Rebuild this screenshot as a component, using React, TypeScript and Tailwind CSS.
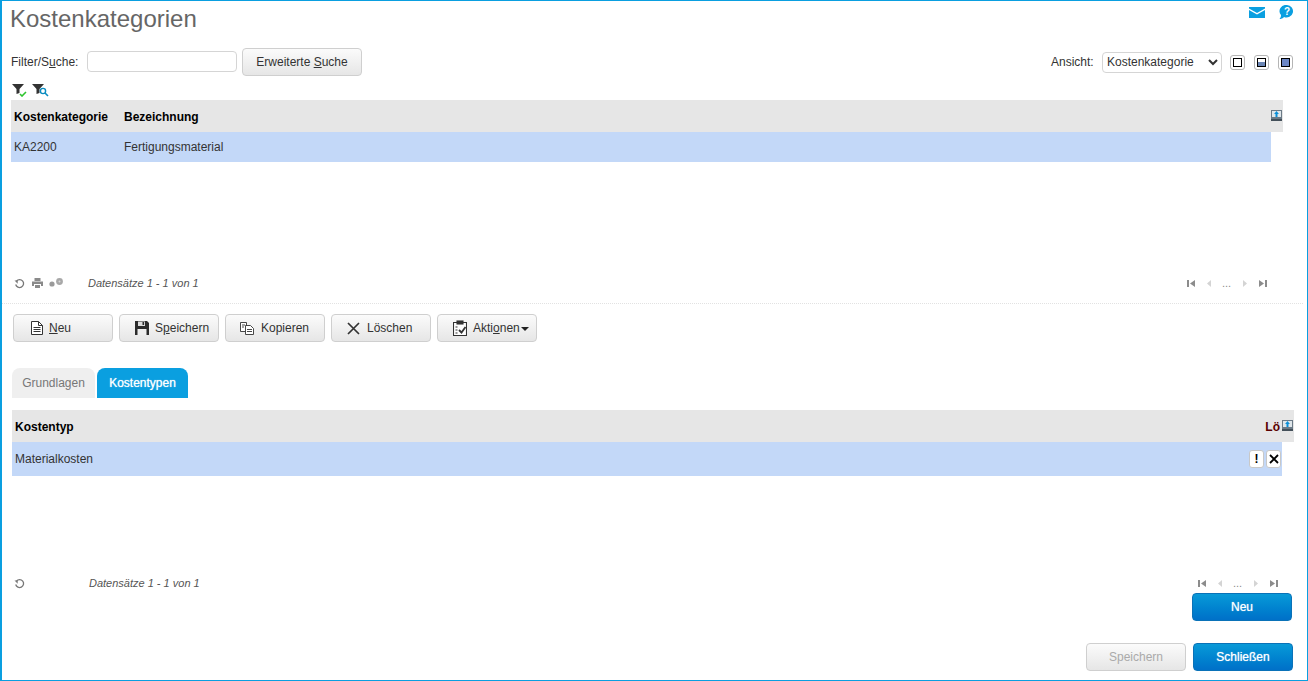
import type { ReactNode } from 'react';

const btn =
  'h-[28px] w-[100px] flex items-center rounded-[4px] border border-[#cfcfcf] bg-gradient-to-b from-[#fbfbfb] to-[#e6e6e6] text-[12px] text-[#333]';
const primary =
  'h-[28px] w-[100px] flex items-center justify-center rounded-[4px] border border-[#0a72b8] bg-gradient-to-b from-[#0a9ad8] to-[#0070c8] text-[12px] text-white [text-shadow:0_0_1px_rgba(255,255,255,0.8)]';

function Funnel() {
  return <path d="M0 0h12l-4.500 5v4l-3 1V5z" fill="#333" />;
}

function FilterIcons() {
  return (
    <div className="ml-[1px] h-[14px] flex items-center gap-[5px]">
      <svg width="15" height="13" viewBox="0 0 15 13">
        <Funnel />
        <path d="M8 10l2 2 4-4" stroke="#2fc42f" strokeWidth="1.6" fill="none" />
      </svg>
      <svg width="17" height="13" viewBox="0 0 17 13">
        <Funnel />
        <circle cx="11" cy="7" r="2.6" fill="#fff" stroke="#0a8cc0" strokeWidth="1.4" />
        <path d="M13 9l3 3" stroke="#0a8cc0" strokeWidth="1.6" />
      </svg>
    </div>
  );
}

function ColumnsIcon() {
  return (
    <svg width="11" height="11" viewBox="0 0 11 11">
      <rect x="0" y="0" width="11" height="9" fill="#6b7a86" />
      <rect x="1" y="1" width="9" height="6" fill="#dfe6ea" />
      <path d="M5.500 1l2.400 3H6.500v3h-2V4H3.100z" fill="#0a8fd8" />
      <rect x="0" y="9" width="11" height="2" fill="#44505a" />
    </svg>
  );
}

function Reload() {
  return (
    <svg width="11" height="11" viewBox="0 0 11 11" fill="none" stroke="#777" strokeWidth="1.3">
      <path d="M2.500 3a4 4 0 1 1-.8 3.500" />
      <path d="M0.500 2.500h3.200v3.200z" fill="#777" stroke="none" />
    </svg>
  );
}

function Printer() {
  return (
    <svg width="11" height="10" viewBox="0 0 11 10" fill="#8a8a8a">
      <path d="M2.500 0h6v3h-6zM0 3.500h11V8H9V6H2v2H0zM3 7h5v3H3z" />
    </svg>
  );
}

function Gears() {
  return (
    <svg width="15" height="10" viewBox="0 0 15 10" fill="#9a9a9a">
      <circle cx="3" cy="6" r="2.600" />
      <circle cx="10.500" cy="3.500" r="3.400" fill="#a8a8a8" />
      <circle cx="10.500" cy="3.500" r="1" fill="#d8d8d8" />
    </svg>
  );
}

function Pager() {
  return (
    <div className="flex items-center text-[#9a9a9a]">
      <svg width="9" height="9" viewBox="0 0 9 9" fill="#8c8c8c">
        <path d="M0 1h2v7H0zM8 1v7L3 4.500z" />
      </svg>
      <svg className="ml-[10px]" width="6" height="9" viewBox="0 0 6 9" fill="#d4d4d4">
        <path d="M5 1v7L1 4.500z" />
      </svg>
      <span className="ml-[10px] w-[9px] text-[11px] leading-[9px] text-[#8a8a8a]">...</span>
      <svg className="ml-[11px]" width="6" height="9" viewBox="0 0 6 9" fill="#d4d4d4">
        <path d="M1 1v7l4-3.500z" />
      </svg>
      <svg className="ml-[10px]" width="9" height="9" viewBox="0 0 9 9" fill="#8c8c8c">
        <path d="M1 1v7l5-3.500zM7 1h2v7H7z" />
      </svg>
    </div>
  );
}

function Records() {
  return <span className="text-[11px] italic text-[#555]">Datensätze 1 - 1 von 1</span>;
}

function DocIcon() {
  return (
    <svg width="12" height="14" viewBox="0 0 12 14" fill="none" stroke="#333">
      <path d="M.500.500h7l4 4v9h-11z" fill="#fff" />
      <path d="M7.500.500v4h4M2.500 6.500h7M2.500 8.500h7M2.500 10.500h7" />
    </svg>
  );
}

function SaveIcon() {
  return (
    <svg width="14" height="14" viewBox="0 0 14 14" fill="#2b2b2b">
      <path d="M0 0h12l2 2v12H0z" />
      <rect x="3" y="0.500" width="7" height="4.500" fill="#ddd" />
      <rect x="7.500" y="1" width="1.600" height="3" fill="#2b2b2b" />
      <rect x="2.500" y="8" width="9" height="6" fill="#eee" />
    </svg>
  );
}

function CopyIcon() {
  return (
    <svg width="14" height="13" viewBox="0 0 14 13" fill="#fff" stroke="#333" strokeWidth="0.900">
      <path d="M.500.500h6v9h-6z" />
      <path d="M5.500 3.500h5l3 3v6h-8z" />
      <path d="M2 3h3M2 5h2M7 7.500h5M7 9.500h5" />
    </svg>
  );
}

function CrossIcon() {
  return (
    <svg width="13" height="13" viewBox="0 0 13 13" stroke="#333" strokeWidth="1.700">
      <path d="M1 1l11 11M12 1L1 12" />
    </svg>
  );
}

function ClipboardIcon() {
  return (
    <svg width="14" height="16" viewBox="0 0 14 16" fill="none" stroke="#333" strokeWidth="1.100">
      <path d="M4 2.500H.500v13h13v-13H10" fill="#fff" />
      <rect x="4" y="1" width="6" height="3" fill="#333" />
      <path d="M2.500 7h2M2.500 10h2M2.500 13h2" />
      <path d="M6 10l2.500 2.500L12.500 7" strokeWidth="1.800" />
    </svg>
  );
}

function ToolButton({ icon, pad, children }: { icon: ReactNode; pad: string; children: ReactNode }) {
  return (
    <button className={`${btn} ${pad}`}>
      {icon}
      {children}
    </button>
  );
}

function ViewToggle({ children }: { children: ReactNode }) {
  return (
    <span className="h-[15px] w-[15px] flex items-center justify-center rounded-[3px] border border-[#b5b5b5] bg-white">
      {children}
    </span>
  );
}

function MiniButton({ children }: { children: ReactNode }) {
  return (
    <span className="h-[18px] w-[15px] flex items-center justify-center rounded-[3px] border border-[#c8c8c8] bg-white text-[12px] font-bold text-black">
      {children}
    </span>
  );
}

export default function App() {
  return (
    <div
      className="h-[681px] w-[1308px] overflow-hidden border border-[#0a9fe0] border-l-2 bg-white pt-[1px] pl-[9px] text-[12px] text-[#333]"
      style={{ fontFamily: '"Liberation Sans", Arial, sans-serif' }}
    >
      {/* Kopfzeile */}
      <div className="h-[46px] flex items-start justify-between">
        <h1 className="mt-[3px] -ml-[1px] text-[24px] leading-[28px] text-[#666]">Kostenkategorien</h1>
        <div className="mt-[3px] mr-[13px] flex items-center gap-[14px]">
          <svg width="16" height="11" viewBox="0 0 16 11">
            <path d="M0 0h16v1.500L8 6 0 1.500z" fill="#0a9fe0" />
            <path d="M0 3l8 4.500L16 3v8H0z" fill="#0a9fe0" />
          </svg>
          <svg width="15" height="14" viewBox="0 0 15 14">
            <path d="M8 0a6.500 6.200 0 1 1-3 11.900C4 13.200 2 14 .500 14 1.800 13 2 11.200 2 10A6.500 6.200 0 0 1 8 0z" fill="#0a9fe0" />
            <text x="8" y="10" textAnchor="middle" fontSize="10" fontWeight="bold" fill="#fff">?</text>
          </svg>
        </div>
      </div>

      {/* Filter */}
      <div className="h-[28px] flex items-center justify-between">
        <div className="flex items-center">
          <span className="w-[76px]">
            Filter/S<u>u</u>che:
          </span>
          <input className="-mt-[1px] h-[21px] w-[150px] rounded-[4px] border border-[#d5d5d5] bg-white" />
          <button className={`${btn} ml-[5px] w-[120px] justify-center`}>
            Erweiterte&nbsp;<u>S</u>uche
          </button>
        </div>
        <div className="mr-[14px] flex items-center">
          <span className="w-[51px]">Ansicht:</span>
          <select className="h-[21px] w-[120px] rounded-[4px] border border-[#d5d5d5] bg-white text-[12px] text-[#333]">
            <option>Kostenkategorie</option>
          </select>
          <div className="ml-[8px] flex items-center gap-[9px]">
            <ViewToggle>
              <span className="h-[9px] w-[9px] border border-black bg-white" />
            </ViewToggle>
            <ViewToggle>
              <span className="h-[9px] w-[9px] border border-black bg-gradient-to-b from-white from-50% to-[#6b86b5] to-50%" />
            </ViewToggle>
            <ViewToggle>
              <span className="h-[9px] w-[9px] border border-black bg-[#6b86c5]" />
            </ViewToggle>
          </div>
        </div>
      </div>

      {/* Obere Tabelle */}
      <div className="mt-[7px] h-[17px]">
        <FilterIcons />
      </div>
      <div className="h-[32px] w-[1272px] flex items-center bg-[#e6e6e6] pt-[1px] font-bold text-black">
        <span className="w-[113px] pl-[3px]">Kostenkategorie</span>
        <span className="flex-1">Bezeichnung</span>
        <span className="mr-[1px] mb-[2px]">
          <ColumnsIcon />
        </span>
      </div>
      <div className="h-[30px] w-[1260px] flex items-center bg-[#c3d8f8]">
        <span className="w-[113px] pl-[3px]">KA2200</span>
        <span>Fertigungsmaterial</span>
      </div>
      <div className="mt-[114px] h-[14px] w-[1272px] flex items-center justify-between">
        <div className="flex items-center pl-[3px]">
          <Reload />
          <span className="ml-[7px]">
            <Printer />
          </span>
          <span className="ml-[6px]">
            <Gears />
          </span>
          <span className="ml-[24px]">
            <Records />
          </span>
        </div>
        <div className="mr-[16px]">
          <Pager />
        </div>
      </div>
      <div className="mt-[13px] mr-[4px] -ml-[9px] border-t border-dotted border-[#e2e2e2]" />

      {/* Aktionen */}
      <div className="mt-[10px] ml-[2px] flex gap-[6px]">
        <ToolButton icon={<DocIcon />} pad="pl-[17px] gap-[6px]">
          <span>
            <u>N</u>eu
          </span>
        </ToolButton>
        <ToolButton icon={<SaveIcon />} pad="pl-[15px] gap-[6px]">
          <span>
            S<u>p</u>eichern
          </span>
        </ToolButton>
        <ToolButton icon={<CopyIcon />} pad="pl-[14px] gap-[7px]">
          Kopieren
        </ToolButton>
        <ToolButton icon={<CrossIcon />} pad="pl-[15px] gap-[7px]">
          Löschen
        </ToolButton>
        <ToolButton icon={<ClipboardIcon />} pad="pl-[15px] gap-[6px]">
          <span className="flex items-center">
            <span>
              Akti<u>o</u>nen
            </span>
            <span className="ml-[1px] mt-[1px] h-0 w-0 border-x-[4px] border-t-[4px] border-x-transparent border-t-[#222]" />
          </span>
        </ToolButton>
      </div>

      {/* Tabs */}
      <div className="mt-[26px] ml-[1px] h-[30px] flex items-stretch gap-[2px]">
        <span className="w-[83px] flex items-center justify-center rounded-t-[8px] bg-[#efefef] text-[#777]">Grundlagen</span>
        <span className="w-[91px] flex items-center justify-center rounded-t-[8px] bg-[#0a9fe0] text-white [text-shadow:0_0_1px_rgba(255,255,255,0.8)]">
          Kostentypen
        </span>
      </div>

      {/* Untere Tabelle */}
      <div className="mt-[12px] ml-[1px] h-[32px] w-[1282px] flex items-center bg-[#e6e6e6] pt-[1px] font-bold text-black">
        <span className="flex-1 pl-[3px]">Kostentyp</span>
        <span className="text-[#5a0000]">Lö</span>
        <span className="ml-[2px] mr-[1px] mb-[2px]">
          <ColumnsIcon />
        </span>
      </div>
      <div className="ml-[1px] h-[34px] w-[1270px] flex items-center justify-between bg-[#c3d8f8] pl-[3px]">
        <span>Materialkosten</span>
        <div className="mr-[1px] flex gap-[2px]">
          <MiniButton>!</MiniButton>
          <MiniButton>
            <svg width="10" height="10" viewBox="0 0 10 10" stroke="#000" strokeWidth="1.800">
              <path d="M1 1l8 8M9 1L1 9" />
            </svg>
          </MiniButton>
        </div>
      </div>
      <div className="mt-[100px] ml-[1px] h-[14px] w-[1282px] flex items-center justify-between">
        <div className="flex items-center pl-[2px]">
          <Reload />
          <span className="ml-[64px]">
            <Records />
          </span>
        </div>
        <div className="mr-[16px]">
          <Pager />
        </div>
      </div>
      <div className="mt-[3px] mr-[15px] flex justify-end">
        <button className={primary}>Neu</button>
      </div>

      {/* Fußzeile */}
      <div className="mt-[22px] mr-[14px] flex justify-end gap-[7px]">
        <button className={`${btn} justify-center text-[#aaa]`}>Speichern</button>
        <button className={primary}>Schließen</button>
      </div>
    </div>
  );
}
